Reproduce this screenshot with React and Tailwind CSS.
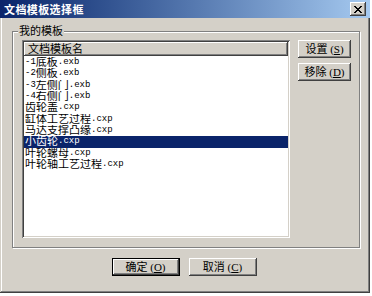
import React from 'react';

const raised =
  'shadow-[inset_-1px_-1px_#404040,inset_1px_1px_#ffffff,inset_-2px_-2px_#808080,inset_2px_2px_#d4d0c8]';
const sunken =
  'shadow-[inset_1px_1px_#808080,inset_-1px_-1px_#ffffff,inset_2px_2px_#404040,inset_-2px_-2px_#d4d0c8]';

const font = { fontFamily: '"Liberation Serif", "Noto Sans CJK SC", serif' };
const mono = { fontFamily: '"Liberation Mono", monospace' };

const templates = [
  '-1底板.exb',
  '-2侧板.exb',
  '-3左侧门.exb',
  '-4右侧门.exb',
  '齿轮盖.cxp',
  '缸体工艺过程.cxp',
  '马达支撑凸缘.cxp',
  '小齿轮.cxp',
  '叶轮螺母.cxp',
  '叶轮轴工艺过程.cxp',
];

// split a name into ascii / cjk runs so the latin part can use a typewriter face
function runs(s) {
  return s.match(/[\x00-\x7f]+|[^\x00-\x7f]+/g) || [];
}

function Btn({ label, hot, def, className = '' }) {
  return (
    <button
      className={`flex items-center justify-center bg-[#d4d0c8] text-[11px] text-black ${
        def ? 'border border-black' : ''
      } ${className}`}
      style={font}
    >
      <span className={`flex h-full w-full items-center justify-center ${raised}`}>
        {label} (<span className="underline">{hot}</span>)
      </span>
    </button>
  );
}

export default function App() {
  const selected = 7;

  return (
    <div className="h-[296px] w-[372px] bg-white" style={font}>
      <div className="flex h-[293px] w-[370px] flex-col bg-[#d4d0c8] shadow-[inset_-1px_-1px_#404040,inset_1px_1px_#d4d0c8,inset_-2px_-2px_#808080,inset_2px_2px_#ffffff]">
        {/* Title bar */}
        <div className="flex h-[18px] items-center justify-between bg-gradient-to-r from-[#0a246a] to-[#a6caf0] pl-[4px] pr-[4px]">
          <span
            className="text-[11px] font-bold tracking-[0.4px] text-white"
            style={{ fontFamily: '"Noto Sans CJK SC", sans-serif' }}
          >
            文档模板选择框
          </span>
          <div className={`flex h-[14px] w-[16px] items-center justify-center bg-[#d4d0c8] ${raised}`}>
            <svg width="8" height="7" viewBox="0 0 8 7" shapeRendering="crispEdges">
              <path
                d="M0 0h2v1h-2zM6 0h2v1h-2zM1 1h2v1h-2zM5 1h2v1h-2zM2 2h4v1h-4zM3 3h2v1h-2zM2 4h4v1h-4zM1 5h2v1h-2zM5 5h2v1h-2zM0 6h2v1h-2zM6 6h2v1h-2z"
                fill="#000"
              />
            </svg>
          </div>
        </div>

        {/* Group box */}
        <div className="relative ml-[12px] mr-[10px] mt-[13px] flex h-[217px] gap-[8px] border border-[#808080] pb-[9px] pl-[9px] pr-[8px] pt-[8px] shadow-[1px_1px_0_#ffffff,inset_1px_1px_0_#ffffff]">
          <span className="absolute -top-[8px] left-[5px] bg-[#d4d0c8] px-[1px] text-[11px] leading-[14px] text-black">
            我的模板
          </span>

          {/* List */}
          <div className={`flex w-[268px] flex-col overflow-hidden bg-white p-[2px] ${sunken}`}>
            <div
              className={`flex h-[14px] shrink-0 items-center bg-[#d4d0c8] pl-[4px] text-[11px] text-black ${raised}`}
            >
              文档模板名
            </div>
            <div className="flex flex-col pt-[1px]">
              {templates.map((t, i) => (
                <div
                  key={t}
                  className={`flex h-[11.33px] items-center overflow-hidden whitespace-pre pl-[1px] text-[10.5px] leading-[11px] ${
                    i === selected ? 'bg-[#0a246a] text-white' : 'text-black'
                  }`}
                >
                  {runs(t).map((r, j) =>
                    /^[\x00-\x7f]+$/.test(r) ? (
                      <span key={j} className="text-[9px]" style={mono}>
                        {r}
                      </span>
                    ) : (
                      <span key={j} className="text-[11px]">
                        {r}
                      </span>
                    )
                  )}
                </div>
              ))}
            </div>
          </div>

          {/* Side buttons */}
          <div className="flex flex-col gap-[5px]">
            <Btn label="设置" hot="S" className="h-[18px] w-[53px]" />
            <Btn label="移除" hot="D" className="h-[18px] w-[53px]" />
          </div>
        </div>

        {/* Bottom buttons */}
        <div className="mt-[10px] flex justify-center gap-[9px] pr-[2px]">
          <Btn label="确定" hot="O" def className="h-[18px] w-[68px]" />
          <Btn label="取消" hot="C" className="h-[18px] w-[68px]" />
        </div>
      </div>
    </div>
  );
}
